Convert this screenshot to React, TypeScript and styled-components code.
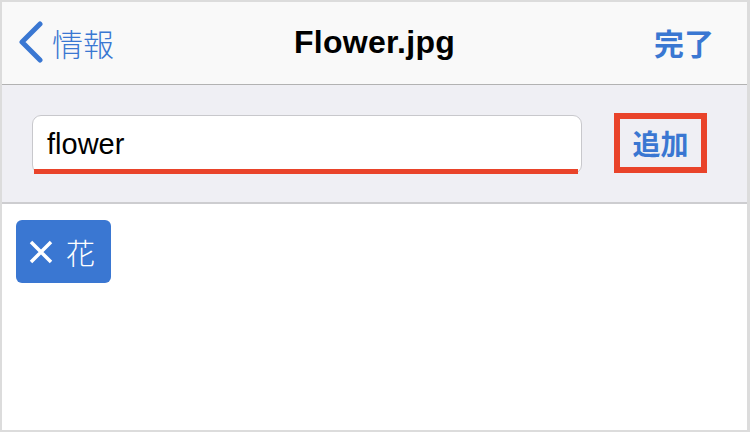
import styled, { createGlobalStyle } from 'styled-components';

const GlobalStyle = createGlobalStyle`
    html, body {
        margin: 0;
        padding: 0;
        background: #ffffff;
    }
`;

const BLUE = '#3a77d2';
const RED = '#e9432a';
const CJK = '"Liberation Sans", "Noto Sans CJK JP", sans-serif';

const Frame = styled.div`
    width: 750px;
    height: 432px;
    box-sizing: border-box;
    border: 2px solid #dcdcdc;
    border-right-width: 3px;
    display: flex;
    flex-direction: column;
    background: #ffffff;
    font-family: ${CJK};
`;

const NavBar = styled.div`
    height: 83px;
    flex-shrink: 0;
    box-sizing: border-box;
    background: #f9f9f9;
    border-bottom: 1px solid #b2b2b2;
    display: grid;
    grid-template-columns: 1fr auto 1fr;
    align-items: center;
    padding: 0 16px 2px 16px;
`;

const BackButton = styled.div`
    display: flex;
    align-items: center;
    gap: 8px;
    color: ${BLUE};
    font-size: 31px;
    font-weight: 300;
    justify-self: start;
`;

const Title = styled.div`
    color: #000;
    font-size: 32px;
    font-weight: 700;
    letter-spacing: 0.3px;
`;

const DoneButton = styled.div`
    justify-self: end;
    margin-right: 17px;
    color: ${BLUE};
    font-size: 30px;
    font-weight: 700;
`;

const SearchArea = styled.div`
    height: 119px;
    flex-shrink: 0;
    box-sizing: border-box;
    background: #efeff4;
    border-bottom: 2px solid #cdcdd0;
    display: flex;
    align-items: center;
    gap: 32px;
    padding: 2px 40px 0 30px;
`;

const Field = styled.div`
    position: relative;
    width: 550px;
    height: 59px;
    box-sizing: border-box;
    background: #fff;
    border: 1px solid #c8c8cc;
    border-radius: 9px;
    display: flex;
    align-items: center;
    padding-left: 14px;
    font-size: 29px;
    color: #000;

    &::after {
        content: '';
        position: absolute;
        left: 1px;
        right: 3px;
        bottom: -1px;
        height: 5px;
        background: ${RED};
    }
`;

const AddButton = styled.div`
    width: 93px;
    height: 60px;
    box-sizing: border-box;
    border: 6px solid ${RED};
    display: flex;
    align-items: center;
    justify-content: center;
    color: ${BLUE};
    font-size: 28px;
    font-weight: 700;
    margin-top: -3px;
`;

const TagArea = styled.div`
    display: flex;
    flex-wrap: wrap;
    gap: 10px;
    padding: 16px 14px;
`;

const Tag = styled.div`
    display: flex;
    align-items: center;
    gap: 12px;
    height: 63px;
    box-sizing: border-box;
    padding: 0 16px 0 12px;
    background: ${BLUE};
    border-radius: 6px;
    color: #fff;
    font-size: 29px;
    font-weight: 300;
`;

const Chevron = () => (
    <svg width="26" height="42" viewBox="0 0 26 42">
        <polyline
            points="22,3 4,21 22,39"
            fill="none"
            stroke={BLUE}
            strokeWidth="5"
            strokeLinecap="round"
            strokeLinejoin="round"
        />
    </svg>
);

const Cross = () => (
    <svg width="26" height="26" viewBox="0 0 26 26">
        <path d="M3 3 L23 23 M23 3 L3 23" stroke="#fff" strokeWidth="3.5" strokeLinecap="butt" />
    </svg>
);

export default function App() {
    return (
        <>
            <GlobalStyle />
            <Frame>
                <NavBar>
                    <BackButton>
                        <Chevron />
                        情報
                    </BackButton>
                    <Title>Flower.jpg</Title>
                    <DoneButton>完了</DoneButton>
                </NavBar>
                <SearchArea>
                    <Field>flower</Field>
                    <AddButton>追加</AddButton>
                </SearchArea>
                <TagArea>
                    <Tag>
                        <Cross />
                        花
                    </Tag>
                </TagArea>
            </Frame>
        </>
    );
}
